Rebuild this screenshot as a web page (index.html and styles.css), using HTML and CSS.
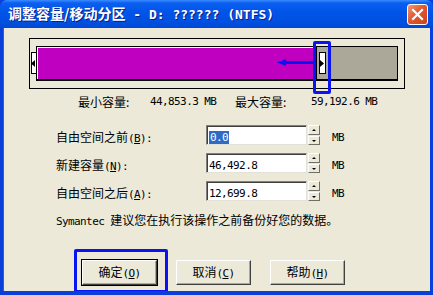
FILE: index.html
```html
<!DOCTYPE html>
<html lang="zh-CN">
<head>
    <meta charset="UTF-8">
    <title>调整容量/移动分区</title>
    <link rel="stylesheet" href="styles.css">
</head>
<body>

<div class="window">
    <!-- Title bar -->
    <div class="titlebar">
        <span class="title">调整容量/移动分区<span class="title-en"> - D: ?????? (NTFS)</span></span>
        <button class="close" aria-label="关闭">
            <svg width="13" height="13" viewBox="0 0 13 13">
                <path d="M2 2 L11 11 M11 2 L2 11" stroke="#fff" stroke-width="2.2" stroke-linecap="square"/>
            </svg>
        </button>
    </div>

    <div class="content">
        <!-- Partition map -->
        <div class="part-box">
            <div class="part-bar">
                <div class="used"></div>
                <div class="used-edge"></div>
                <div class="free"></div>

                <div class="handle handle-left">
                    <svg width="4" height="7" viewBox="0 0 4 7"><path d="M0 3.5 L4 0 L4 7 Z" fill="#000"/></svg>
                </div>
                <div class="handle handle-right">
                    <svg width="4" height="7" viewBox="0 0 4 7"><path d="M4 3.5 L0 0 L0 7 Z" fill="#000"/></svg>
                </div>

                <svg class="drag-arrow" width="38" height="9" viewBox="0 0 38 9">
                    <path d="M0 4.5 L9 1 L9 8 Z" fill="#0a14f0"/>
                    <rect x="8" y="3" width="30" height="3" fill="#0a14f0"/>
                </svg>
                <div class="mark mark-handle"></div>
            </div>
        </div>

        <div class="limits">
            <span>最小容量:</span>
            <span class="en">44,853.3 MB</span>
            <span>最大容量:</span>
            <span class="en">59,192.6 MB</span>
        </div>

        <!-- Size fields -->
        <div class="fields">
            <label>自由空间之前<span class="en">(<u>B</u>):</span></label>
            <div class="field">
                <div class="input"><span class="en selected">0.0</span></div>
                <div class="spin"><span class="up"></span><span class="down"></span></div>
            </div>
            <span class="en unit">MB</span>

            <label>新建容量<span class="en">(<u>N</u>):</span></label>
            <div class="field">
                <div class="input"><span class="en">46,492.8</span></div>
                <div class="spin"><span class="up"></span><span class="down"></span></div>
            </div>
            <span class="en unit">MB</span>

            <label>自由空间之后<span class="en">(<u>A</u>):</span></label>
            <div class="field">
                <div class="input"><span class="en">12,699.8</span></div>
                <div class="spin"><span class="up"></span><span class="down"></span></div>
            </div>
            <span class="en unit">MB</span>
        </div>

        <p class="note"><span class="en">Symantec </span>建议您在执行该操作之前备份好您的数据。</p>

        <!-- Buttons -->
        <div class="buttons">
            <button class="btn default">确定<span class="en">(<u>O</u>)</span><span class="mark mark-ok"></span></button>
            <button class="btn">取消<span class="en">(<u>C</u>)</span></button>
            <button class="btn">帮助<span class="en">(<u>H</u>)</span></button>
        </div>
    </div>
</div>

</body>
</html>
```

FILE: styles.css
```css
* {
    box-sizing: border-box;
    margin: 0;
    padding: 0;
}

:root {
    --face: #ece9d8;
    --frame: #0a3fd9;
    --mark: #0a14f0;
}

body {
    width: 433px;
    height: 295px;
    overflow: hidden;
    font-family: 'Noto Sans CJK SC', sans-serif;
    font-size: 12px;
    line-height: 14px;
    color: #000;
    background: var(--face);
}

.en {
    font-family: 'DejaVu Sans Mono', monospace;
    font-size: 11px;
    letter-spacing: -0.6px;
}

/* Window frame */
.window {
    width: 433px;
    height: 295px;
    display: flex;
    flex-direction: column;
    background: var(--frame);
}

.titlebar {
    flex: none;
    height: 28px;
    display: flex;
    align-items: center;
    justify-content: space-between;
    padding: 0 5px 0 8px;
    background: linear-gradient(to bottom, #3b8cff 0, #0a5ef0 3px, #0054e8 12px, #0050e0 22px, #0047d4 28px);
    border-radius: 7px 7px 0 0;
}

.title {
    color: #fff;
    font-size: 14px;
    font-weight: 700;
    text-shadow: 1px 1px 0 #0a1e8a;
    white-space: pre;
}

.title-en {
    font-family: 'DejaVu Sans Mono', monospace;
    font-size: 13px;
    letter-spacing: 0;
}

.close {
    width: 21px;
    height: 21px;
    border: 1px solid #fff;
    border-radius: 3px;
    background: linear-gradient(135deg, #f39a78 0%, #e2582e 45%, #cc431c 100%);
    display: flex;
    align-items: center;
    justify-content: center;
}

.content {
    flex: 1;
    min-height: 0;
    overflow: hidden;
    margin: 0 3px 4px 3px;
    background: var(--face);
    border-left: 1px solid #1a64ec;
    padding-top: 10px;
}

/* Partition map */
.part-box {
    position: relative;
    margin-left: 25px;
    width: 376px;
    height: 51px;
    border: 1px solid #000;
    padding: 7px 0 0 6px;
}

.part-bar {
    position: relative;
    width: 362px;
    height: 35px;
    display: flex;
    border: 1px solid #000;
    border-bottom-width: 2px;
}

.used {
    width: 276px;
    background: #c000c0;
    border-top: 1px solid #fff;
    border-left: 1px solid #fff;
}

.used-edge {
    width: 4px;
    background: #ff00ff;
    border-right: 1px solid #000;
}

.free {
    flex: 1;
    background: #aca899;
}

.handle {
    position: absolute;
    top: 5px;
    width: 6px;
    height: 22px;
    background: #fff;
    border: 1px solid #000;
    display: flex;
    align-items: center;
}

.handle-left {
    left: -6px;
}

.handle-left svg {
    margin-left: -1px;
}

.handle-right {
    left: 282px;
    width: 7px;
}

.drag-arrow {
    position: absolute;
    left: 240px;
    top: 11px;
}

.mark {
    position: absolute;
    border: 3px solid var(--mark);
    border-radius: 2px;
}

.mark-handle {
    left: 276px;
    top: -6px;
    width: 18px;
    height: 53px;
}

.limits {
    display: grid;
    grid-template-columns: 72px 85px 76px auto;
    margin: 6px 0 0 74px;
    height: 14px;
}

/* Size fields */
.fields {
    display: grid;
    grid-template-columns: 150px 114px auto;
    grid-auto-rows: 20px;
    row-gap: 8px;
    align-items: center;
    margin: 16px 0 0 52px;
}

.fields label {
    padding-top: 5px;
}

.field {
    display: flex;
    gap: 1px;
}

.input {
    width: 102px;
    height: 20px;
    background: #fff;
    border: 1px solid #7f7f7f;
    border-right-color: #e4e2d8;
    border-bottom-color: #e4e2d8;
    box-shadow: inset 1px 1px 0 #404040;
    padding: 2px 0 0 2px;
    line-height: 15px;
}

.selected {
    background: #316ac5;
    color: #fff;
    padding: 0 1px;
}

.spin {
    width: 12px;
    height: 20px;
    display: flex;
    flex-direction: column;
    gap: 1px;
}

.spin span {
    flex: 1;
    background: var(--face);
    border: 1px solid #fff;
    border-right-color: #716f64;
    border-bottom-color: #716f64;
    position: relative;
}

.spin span::after {
    content: "";
    position: absolute;
    left: 3px;
    top: 3px;
    border-left: 2px solid transparent;
    border-right: 2px solid transparent;
}

.spin .up::after {
    border-bottom: 2px solid #000;
}

.spin .down::after {
    border-top: 2px solid #000;
}

.unit {
    margin-left: 12px;
    padding-top: 6px;
}

.note {
    margin: 12px 0 0 52px;
}

/* Buttons */
.buttons {
    display: flex;
    gap: 19px;
    margin: 31px 0 0 78px;
}

.btn {
    position: relative;
    width: 75px;
    height: 25px;
    font-family: inherit;
    font-size: 12px;
    line-height: 14px;
    background: var(--face);
    border: 1px solid #fff;
    border-right-color: #404040;
    border-bottom-color: #404040;
    box-shadow: inset -1px -1px 0 #aca899;
    padding-top: 1px;
}

.btn.default {
    outline: 1px solid #000;
}

.mark-ok {
    left: -9px;
    top: -12px;
    width: 94px;
    height: 44px;
}
```
